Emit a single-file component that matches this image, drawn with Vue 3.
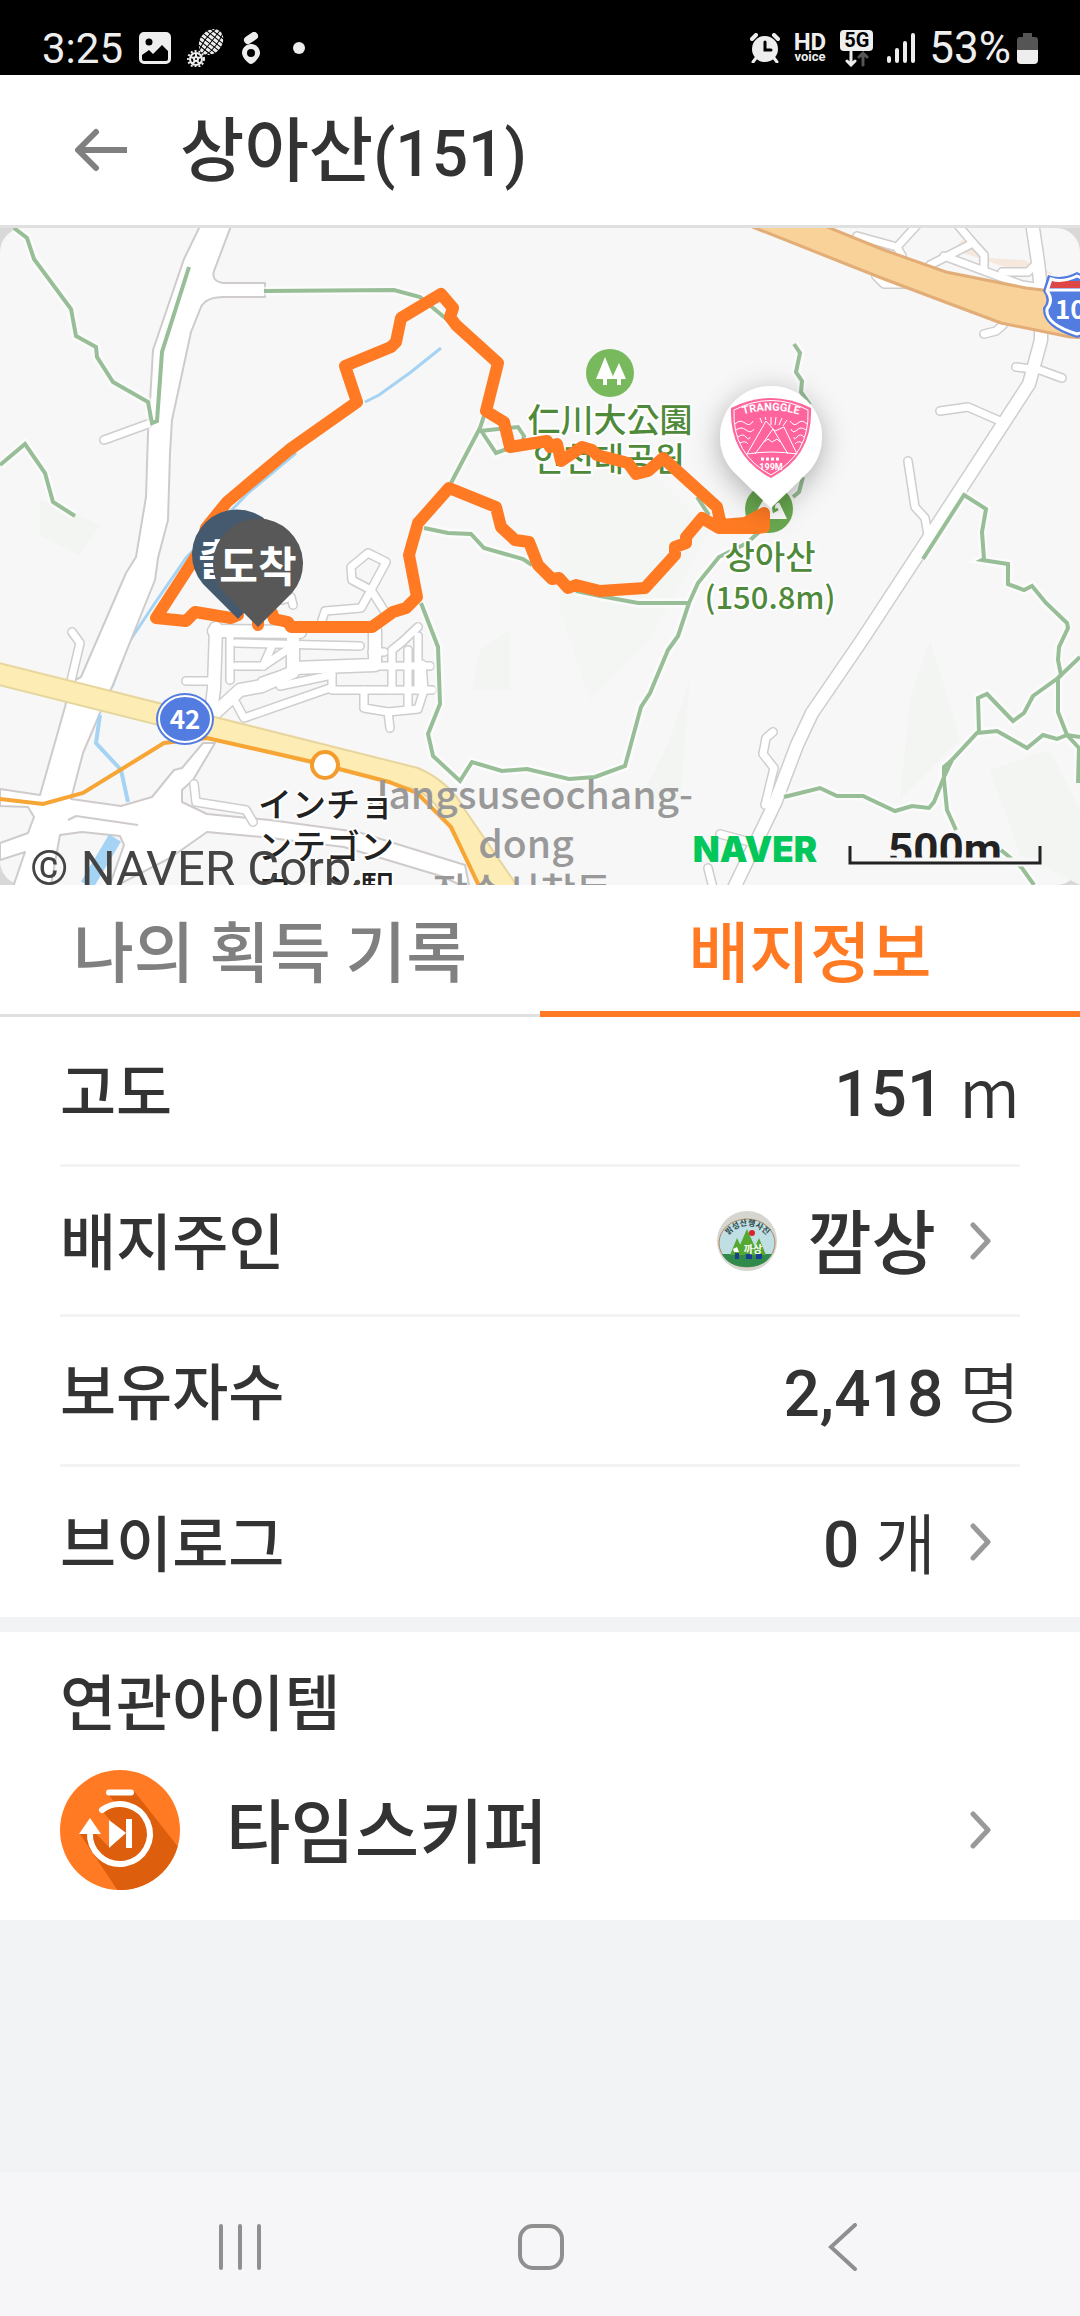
<script setup>
import { ref } from 'vue'

const activeTab = ref('badge')

const tabs = [
  { id: 'record', label: '나의 획득 기록' },
  { id: 'badge', label: '배지정보' },
]

const rows = [
  { label: '고도', value: '151', unit: 'm' },
  { label: '배지주인', value: '깜상', name: true, link: true },
  { label: '보유자수', value: '2,418', unit: '명' },
  { label: '브이로그', value: '0', unit: '개', link: true },
]

// Map geometry
const trails = [
  '14,228 27,238 34,259 71,309 76,336 96,347 97,357 113,382 148,402 152,423 157,421 162,352 189,267',
  '0,465 25,444 45,473 53,502 75,516',
  '264,291 394,290 420,297 456,327',
  '486,410 480,428 451,483',
  '480,431 518,427 524,436 522,444',
  '480,429 496,453 510,448',
  '424,528 448,533 471,534 484,548 523,559 532,565',
  '421,603 438,647 440,704 428,734 433,756 460,781 472,762 502,771 527,769 569,779 595,777 625,766 641,707 650,693 668,650 678,636 689,603 698,583 719,557 747,543 759,532',
  '689,603 638,603 600,596 576,591',
  '794,344 800,353 796,372 802,381 801,392 810,405',
  '803,477 799,492 793,497',
  '697,497 709,515',
  '923,559 964,495 986,509 982,532 984,559 982,560 1008,564 1008,584 1024,590 1032,586 1046,603 1067,623 1068,628 1059,647 1058,660 1061,675 1058,678 1058,712 1067,735 1079,748 1078,783',
  '1080,657 1058,678 1033,696 1024,713 1013,721 987,694 978,698 979,732',
  '1080,737 1067,735 1057,739 1043,735 1027,748 997,731 977,733 952,760 944,777 934,802 929,808 912,806 895,811 863,796 837,796 820,788 784,797',
  '952,760 944,767 944,780 947,810 956,830',
  '1001,850 1013,860 1022,868 1034,885',
]

const lanes = [
  '104,440 148,424',
  '72,632 80,643 70,685',
  '857,236 897,247 917,225',
  '897,247 902,256',
  '930,265 973,243 957,224',
  '973,243 984,255 984,270',
  '944,256 1022,285 1036,287',
  '1002,272 1028,272 1038,262',
  '876,276 884,284 912,284',
  '984,334 996,331 1003,325',
  '1016,367 1040,370 1062,378',
  '940,411 968,407 1000,421',
  '908,461 915,507 925,518 928,535',
  '773,732 766,738 763,754 774,768 765,805',
  '708,868 714,892',
  '720,834 750,842',
  '186,681 212,681',
  '230,634 230,680',
  '236,643 360,646',
  '263,666 272,646',
  '236,666 263,666 293,646',
  '236,703 244,718 330,688',
  '262,681 300,668 372,664',
  '280,686 332,675',
  '332,668 332,690 375,690 432,690',
  '364,690 364,708 388,712 390,728',
  '388,712 418,709 424,690 422,664',
  '380,666 430,666',
  '372,652 384,652',
  '392,690 392,650 402,642 418,627',
  '408,650 408,706',
  '418,636 418,690',
  '322,620 325,611 361,608 371,590 352,580 351,567 368,553 386,562 371,590 385,612',
  '293,605 291,597 282,600',
  '194,784 196,802 246,810 253,822',
]

const avenues = [
  '293,630 293,672 262,686 240,690 205,722',
  '375,630 375,665 293,668',
  '216,628 214,688 212,705',
  '214,631 300,632',
]

const route = '238,615 231,618 195,612 186,621 156,618 200,550 206,528 227,502 289,450 357,402 345,366 391,347 396,342 401,318 441,294 453,308 450,317 456,325 498,363 486,411 504,422 510,447 547,441 550,447 557,444 561,461 582,447 592,450 597,455 628,463 636,474 648,471 663,458 717,507 721,525 745,523 764,513 764,527 758,528 719,528 702,518 686,537 686,543 675,547 675,555 645,588 600,591 576,585 568,588 559,578 552,579 538,565 529,542 515,540 501,527 496,507 449,488 418,523 409,555 417,597 406,608 393,612 372,627 291,627 288,622 274,619 272,613 258,607 258,625'
</script>

<template>
  <div class="screen">
    <!-- Status bar -->
    <div class="status">
      <div class="status-left">
        <span class="clock">3:25</span>
        <svg width="32" height="32" viewBox="0 0 32 32">
          <path fill="#eee" fill-rule="evenodd" d="M5 0h22a5 5 0 0 1 5 5v22a5 5 0 0 1-5 5H5a5 5 0 0 1-5-5V5a5 5 0 0 1 5-5zM10 6.500a3.500 3.500 0 1 0 0 7 3.500 3.500 0 0 0 0-7zM3 23v4a2 2 0 0 0 2 2h22a2 2 0 0 0 2-2v-8l-6-6-9 9-4-4z" />
        </svg>
        <svg width="38" height="38" viewBox="0 0 38 38" fill="none" stroke="#eee">
          <g transform="rotate(38 24 13)">
            <ellipse cx="24" cy="13" rx="11" ry="14" fill="#eee" stroke="none" />
            <path d="M12 3h24M12 7h24M12 11h24M12 15h24M12 19h24M12 23h24" stroke="#000" stroke-width="1" />
            <path d="M20 -1q-4 14 0 28M28 -1q4 14 0 28M24 -1v28" stroke="#000" stroke-width="1" />
          </g>
          <circle cx="9" cy="30" r="6" stroke-width="2" />
          <circle cx="9" cy="30" r="8" stroke-width="2" stroke-dasharray="2 2" />
          <circle cx="9" cy="30" r="2" stroke-width="2" />
          <path d="M9 24v4M3 28l4 1M15 28l-4 1M5 35l3-3M13 35l-3-3" stroke-width="2" />
        </svg>
        <svg width="20" height="32" viewBox="0 0 20 32">
          <path d="M7 8L13 4" stroke="#eee" stroke-width="8" stroke-linecap="round" />
          <path fill="#eee" fill-rule="evenodd" d="M10 12c5 0 9 4 9 9 0 4-6 11-9 11s-9-7-9-11c0-5 4-9 9-9zm0 5a4 4 0 1 0 0 8 4 4 0 0 0 0-8z" />
        </svg>
        <span class="dot"></span>
      </div>
      <div class="status-right">
        <svg width="30" height="30" viewBox="0 0 30 30">
          <circle cx="15" cy="16" r="13" fill="#eee" />
          <path d="M2 6l4-4M28 6l-4-4" stroke="#eee" stroke-width="4" stroke-linecap="round" />
          <path d="M6 25l-3 4M24 25l3 4" stroke="#eee" stroke-width="3" stroke-linecap="round" />
          <path d="M15 9v8h6" stroke="#000" stroke-width="3" fill="none" stroke-linecap="round" />
        </svg>
        <span class="hd"><b>HD</b><small>voice</small></span>
        <span class="net">
          <b>5G</b>
          <svg width="24" height="16" viewBox="0 0 24 16" fill="none" stroke-width="3" stroke-linecap="round">
            <path d="M6 1v13M2 10l4 4 4-4" stroke="#eee" />
            <path d="M18 14V2M14 6l4-4 4 4" stroke="#555" />
          </svg>
        </span>
        <svg width="28" height="30" viewBox="0 0 28 30" stroke="#eee" stroke-width="4" stroke-linecap="round">
          <path d="M2 25v3M10 17v11M18 10v18M26 2v26" />
        </svg>
        <span class="battery">
          <span class="percent">53%</span>
          <svg width="21" height="32" viewBox="0 0 21 32">
            <path fill="#555" d="M6 1h9v4h3a3 3 0 0 1 3 3v11H0V8a3 3 0 0 1 3-3h3z" />
            <path fill="#eee" d="M0 18h21v10a4 4 0 0 1-4 4H4a4 4 0 0 1-4-4z" />
          </svg>
        </span>
      </div>
    </div>

    <!-- Header -->
    <header class="header">
      <button class="icon-button" aria-label="뒤로">
        <svg width="54" height="46" viewBox="0 0 54 46" fill="none" stroke="#808080" stroke-width="6">
          <path d="M4 23h49" />
          <path d="M22 5L4 23l18 18" stroke-linecap="round" stroke-linejoin="round" />
        </svg>
      </button>
      <h1>상아산<span class="num">(151)</span></h1>
    </header>

    <!-- Map -->
    <div class="map">
      <svg viewBox="0 228 1080 657">
        <defs>
          <filter id="pin-shadow" x="-60%" y="-60%" width="220%" height="220%">
            <feDropShadow dx="0" dy="6" stdDeviation="14" flood-color="#000" flood-opacity="0.3" />
          </filter>
        </defs>
        <rect x="0" y="228" width="1080" height="657" fill="#d8d8d8" />
        <rect x="0" y="228" width="1080" height="657" rx="24" fill="#f7f7f7" />

        <g fill="#f2f5f1">
          <path d="M560 480l80-20 70 70-60 110-60 60-30-90z" opacity="0.6" />
          <path d="M40 500l60 25-20 30-40-20z" />
          <path d="M930 640l30 100-60 60 10-100z" />
          <path d="M990 770l60-20 30 60v75l-60-30z" />
          <path d="M480 650l30-20v60h-38zM640 800l30-60 20-60-10 120z" />
        </g>
        <g fill="#f7e8de">
          <path d="M962 240l26 18 36 2 30 14-40-4-60-20z" />
        </g>

        <!-- Water -->
        <g fill="none" stroke="#a5d3f3">
          <polyline points="441,348 411,372 379,395 365,402" stroke-width="3" />
          <polyline points="296,453 248,493 186,558 155,603 129,642 112,687" stroke-width="3" />
        </g>

        <!-- Roads -->
        <g fill="#fff" stroke="#cfcbca" stroke-width="2" stroke-linejoin="round">
          <path d="M200 226L184 259 153 350 150 402 148 433 146 497 136 557 126 573 81 677 71 682 65 707 40 795 0 789V806L28 807 34 817 28 833 0 843V860L25 852 12 890H50L60 835 82 832 120 836 124 845 108 890 170 858 207 832 262 837 344 847 444 877 470 890 465 865 358 832 270 820 207 814 182 802 182 790 193 780 215 743 203 743 182 768 174 770 152 797 121 806 71 799 83 753 100 713 112 687 155 580 158 558 168 520 170 453 172 420 191 332 201 307Q206 297 224 297H265V283H223Q211 281 214 271L231 226z" />
        </g>
        <path d="M68 820L76 816 138 825" fill="none" stroke="#cfcbca" stroke-width="2" />
        <g fill="none" stroke="#a5d3f3">
          <polyline points="100,715 96,743 121,770 128,802" stroke-width="4" />
          <path d="M115 838L87 885" stroke-width="14" />
        </g>
        <g fill="none" stroke-linecap="round" stroke-linejoin="round">
          <g stroke="#cfcdcd" stroke-width="10">
            <polyline v-for="p in lanes" :key="p" :points="p" />
          </g>
          <g stroke="#cfcdcd" stroke-width="15">
            <polyline v-for="p in avenues" :key="p" :points="p" />
            <polyline points="1032,222 1038,262 1041,290 1041,340 1029,384 921,550 862,640 812,713 797,745 775,803 733,890" />
          </g>
          <g stroke="#fff" stroke-width="7">
            <polyline v-for="p in lanes" :key="p" :points="p" />
          </g>
          <g stroke="#fff" stroke-width="12">
            <polyline v-for="p in avenues" :key="p" :points="p" />
            <polyline points="1032,222 1038,262 1041,290 1041,340 1029,384 921,550 862,640 812,713 797,745 775,803 733,890" />
          </g>
        </g>

        <!-- Highways -->
        <path d="M745 224L884 279 953 305 1001 323 1070 337 1090 338V292L1043 290 1026 288 946 272 884 250 820 224z" fill="#f8d298" stroke="#e2ad76" stroke-width="3" />
        <path d="M-5 662L418 768Q450 782 465 810L520 890H482L444 817Q430 792 406 787L-5 684z" fill="#fdedb4" stroke="#e6d69e" stroke-width="2" />
        <polyline points="0,799 43,804 83,793 164,743 207,738 313,762 389,782 417,793 451,827 480,888" fill="none" stroke="#f7a535" stroke-width="4" />
        <circle cx="325" cy="765" r="13" fill="#fff" stroke="#f39b2c" stroke-width="4" />

        <!-- Trails -->
        <g fill="none" stroke="#fff" stroke-width="9" opacity="0.6">
          <polyline v-for="p in trails" :key="p" :points="p" />
        </g>
        <g fill="none" stroke="#98be97" stroke-width="4">
          <polyline v-for="p in trails" :key="p" :points="p" />
        </g>

        <!-- Road numbers -->
        <ellipse cx="185" cy="719" rx="29" ry="26" fill="#527ce0" />
        <ellipse cx="185" cy="719" rx="26" ry="23" fill="none" stroke="#fff" stroke-width="2" />
        <text class="road" x="185" y="729" font-size="26">42</text>
        <g>
          <path d="M1048 275Q1062 280 1077 272 1092 280 1106 275L1112 292Q1104 300 1112 310 1112 328 1077 338 1042 328 1043 308 1050 300 1043 291z" fill="#527ce0" />
          <path d="M1052 281H1100V288H1050z" fill="#df4646" />
          <path d="M1051 279Q1062 283 1077 276 1092 283 1104 279L1108 291Q1100 300 1108 310 1108 324 1077 334 1045 324 1047 309 1054 300 1047 291zM1049 290H1106" fill="none" stroke="#fff" stroke-width="3" />
          <text class="road" x="1078" y="319" font-size="26">100</text>
        </g>

        <!-- Places -->
        <circle cx="610" cy="373" r="24" fill="#78b95d" />
        <path d="M605 357l9 22h-7v6h-4v-6h-7zM619 363l7 16h-5v6h-4v-6h-3l-1-3z" fill="#fff" />
        <circle cx="769" cy="509" r="24" fill="#68a84f" />
        <path d="M752 519l14-24 8 9 5-2 8 17z" fill="#fff" />
        <path d="M780 501q-8 0-6 10l4-2" fill="none" stroke="#68a84f" stroke-width="3" />
        <g class="place">
          <text x="610" y="432" font-size="33">仁川大公園</text>
          <text x="609" y="471" font-size="33">인천대공원</text>
          <text x="770" y="569" font-size="33">상아산</text>
          <text x="770" y="609" font-size="31">(150.8m)</text>
        </g>
        <g class="district">
          <text x="530" y="809" font-size="39">Jangsuseochang-</text>
          <text x="526" y="858" font-size="39">dong</text>
          <text x="522" y="906" font-size="39">장수서창동</text>
        </g>
        <g class="station">
          <text x="326" y="817" font-size="34">インチョ</text>
          <text x="326" y="859" font-size="34">ンテゴン</text>
          <text x="326" y="901" font-size="34">ウォン駅</text>
        </g>

        <!-- Route -->
        <polyline :points="route" fill="none" stroke="#ff7a22" stroke-width="12" stroke-linecap="round" stroke-linejoin="round" />

        <!-- Start and finish pins -->
        <path d="M238 619L203 584A45 45 0 1 1 271 584z" fill="#455a6e" />
        <text class="pin" x="237" y="575" font-size="42">출발</text>
        <path d="M258 627L224 593A45 45 0 1 1 292 593z" fill="#585858" />
        <text class="pin" x="258" y="582" font-size="42">도착</text>

        <!-- Badge pin -->
        <path d="M771 508L733 471A51 51 0 1 1 809 471z" fill="#fff" filter="url(#pin-shadow)" />
        <path d="M731 408Q771 388 811 408 813 456 771 478 729 456 731 408z" fill="#ff659c" />
        <g fill="none" stroke="#fff" stroke-width="1">
          <path d="M734 410Q771 391 808 410 810 454 771 475 732 454 734 410z" />
          <path d="M747 454L766 421 775 431 784 427 797 454M755 454L773 429 788 454M747 454Q771 450 797 454" />
          <path d="M735 424q5-5 10-1t8-2M736 430q5-4 10 0t8-1M738 437q5-4 8 0t4 0M740 443q5-3 8 1M807 424q-5-5-9-1t-8-2M806 430q-5-4-9 0t-6-1M804 437q-4-4-7 0t-3 0M802 443q-4-3-7 1" />
          <path d="M771 417v8M776 417l-1 8M782 418l-3 7M787 420l-4 6M765 417l1 3M760 418l2 5M764 442l4-3 4 3 5-3 3 3" />
        </g>
        <defs><path id="badge-arc" d="M739 416Q771 405 803 416" /></defs>
        <text class="badge-text" font-size="11"><textPath href="#badge-arc" startOffset="50%">TRANGGLE</textPath></text>
        <path d="M761 459h20" stroke="#fff" stroke-width="3" stroke-dasharray="3 2" />
        <text class="badge-text" x="771" y="470" font-size="9">199M</text>

        <!-- Attribution and scale -->
        <text class="copyright" x="30" y="885" font-size="49">© NAVER Corp.</text>
        <text class="naver" x="755" y="862" font-size="35">NAVER</text>
        <text class="scale" x="945" y="865" font-size="44">500m</text>
        <path d="M850 862H1040" stroke="#f7f7f7" stroke-width="9" />
        <path d="M850 846V863H1040V846" fill="none" stroke="#222" stroke-width="3" />
      </svg>
    </div>

    <!-- Tabs -->
    <nav class="tabs">
      <button
        v-for="tab in tabs"
        :key="tab.id"
        :class="{ active: activeTab === tab.id }"
        @click="activeTab = tab.id">{{ tab.label }}</button>
    </nav>

    <!-- Badge info -->
    <main>
      <section class="info">
        <component :is="row.link ? 'button' : 'div'" v-for="row in rows" :key="row.label" class="row">
          <span class="label">{{ row.label }}</span>
          <svg v-if="row.name" class="avatar" width="60" height="60" viewBox="0 0 60 60">
            <circle cx="30" cy="30" r="30" fill="#d5d6d0" />
            <ellipse cx="30" cy="32" rx="28" ry="24" fill="#bfdfe5" stroke="#b08a62" stroke-width="1" />
            <path d="M5 43H55Q48 56 30 56T5 43z" fill="#2f8a4b" />
            <path d="M30 18l11 25H19zM20 27l8 17H13zM42 27l7 17H34z" fill="#55a832" />
            <circle cx="35" cy="22" r="3" fill="#d8262c" />
            <path d="M18 42h4v6h-4zM29 43h6v5h-6zM39 43h6v5h-6z" fill="#1b3d92" />
            <path d="M16 38l4-2 2 5h-5z" fill="#fff" />
            <defs><path id="avatar-arc" d="M7 29Q30 0 54 29" /></defs>
            <text font-size="8" font-weight="700" fill="#2f4a48"><textPath href="#avatar-arc" startOffset="50%" text-anchor="middle">밝성산행사진</textPath></text>
            <text x="36" y="42" font-size="10" font-weight="700" fill="#fff" text-anchor="middle">까상</text>
          </svg>
          <span :class="row.name ? 'name' : 'value'">{{ row.value }}</span>
          <span v-if="row.unit" class="unit">{{ row.unit }}</span>
          <svg v-if="row.link" class="chevron" width="22" height="38" viewBox="0 0 22 38">
            <path d="M3 3l15 16L3 35" />
          </svg>
        </component>
      </section>

      <section class="related">
        <h2>연관아이템</h2>
        <button class="item">
          <svg width="120" height="120" viewBox="0 0 120 120">
            <defs>
              <clipPath id="item-clip"><circle cx="60" cy="60" r="60" /></clipPath>
            </defs>
            <circle cx="60" cy="60" r="60" fill="#ff7a22" />
            <path clip-path="url(#item-clip)" d="M48 24L74 21 130 92 110 130 66 130 20 64 36 64 44 50 51 78 62 62 42 40 56 34z" fill="#dd5f0d" />
            <path d="M42 40L66 74 32 68 20 64 60 124 90 90 60 34z" fill="#dd5f0d" clip-path="url(#item-clip)" />
            <path d="M41 41L50 50V78L32 60z" fill="#ff7a22" />
            <path d="M49 22.500H71" stroke="#fff" stroke-width="6" stroke-linecap="round" />
            <path d="M42 40A30 30 0 1 1 30 62" fill="none" stroke="#fff" stroke-width="6" stroke-linecap="round" />
            <path d="M30 48L41 64H19zM49 50L66 63V49H72V78H66V63L49 78z" fill="#fff" />
          </svg>
          <span class="item-name">타임스키퍼</span>
          <svg class="chevron" width="22" height="38" viewBox="0 0 22 38">
            <path d="M3 3l15 16L3 35" />
          </svg>
        </button>
      </section>
    </main>

    <!-- System navigation -->
    <footer class="system">
      <button class="icon-button" aria-label="최근 앱">
        <svg width="46" height="48" viewBox="0 0 46 48" stroke="#8f8f8f" stroke-width="4" stroke-linecap="round">
          <path d="M4 3v42M23 3v42M42 3v42" />
        </svg>
      </button>
      <button class="icon-button" aria-label="홈">
        <svg width="48" height="48" viewBox="0 0 48 48" fill="none" stroke="#8f8f8f" stroke-width="4">
          <rect x="3" y="3" width="42" height="42" rx="13" />
        </svg>
      </button>
      <button class="icon-button" aria-label="뒤로 가기">
        <svg width="46" height="48" viewBox="0 0 46 48" fill="none" stroke="#8f8f8f" stroke-width="4" stroke-linecap="round">
          <path d="M36 2L12 24l24 22" />
        </svg>
      </button>
    </footer>
  </div>
</template>

<style>
body {
  margin: 0;
  background: #f1f3f5;
}
</style>

<style scoped>
.screen {
  display: flex;
  flex-direction: column;
  min-height: 100vh;
  color: #333;
  font-family: "Noto Sans CJK KR", "Noto Sans", sans-serif;
  font-weight: 500;
}

svg {
  display: block;
  flex: none;
}

button {
  padding: 0;
  border: none;
  background: none;
  color: inherit;
  font: inherit;
  cursor: pointer;
}

/* Status bar */
.status {
  display: flex;
  justify-content: space-between;
  box-sizing: border-box;
  height: 75px;
  padding: 21px 42px 0 42px;
  background: #000;
  color: #eee;
  font-family: Roboto, sans-serif;
  font-weight: 400;
}

.status-left,
.status-right,
.battery {
  display: flex;
  align-items: center;
}

.status-left {
  gap: 16px;
}

.status-right {
  gap: 14px;
}

.battery {
  gap: 6px;
}

.clock {
  font-size: 42px;
}

.percent {
  font-size: 44px;
}

.dot {
  width: 12px;
  height: 12px;
  margin-left: 16px;
  border-radius: 50%;
  background: #eee;
}

.hd,
.net {
  display: flex;
  flex-direction: column;
  align-items: center;
}

.hd b {
  font-size: 24px;
  line-height: 18px;
}

.hd small {
  font-size: 13px;
  line-height: 12px;
  font-weight: 700;
}

.net b {
  padding: 0 4px;
  border-radius: 4px;
  background: #eee;
  color: #000;
  font-size: 20px;
  line-height: 21px;
}

/* Header */
.header {
  display: flex;
  align-items: center;
  gap: 52px;
  box-sizing: border-box;
  height: 153px;
  padding: 0 74px;
  border-bottom: 3px solid #e0e0e0;
  background: #fff;
}

.icon-button {
  display: flex;
}

h1 {
  margin: 0;
  font-size: 70px;
  line-height: 100px;
  font-weight: 500;
}

.num,
.value {
  font-family: Roboto, sans-serif;
  font-size: 64px;
}

/* Map */
.map {
  overflow: hidden;
}

.map svg {
  width: 100%;
  height: auto;
}

.map text {
  text-anchor: middle;
  font-family: "Noto Sans CJK KR", sans-serif;
  font-weight: 500;
}

.map .road {
  fill: #fff;
  font-weight: 700;
}

.place,
.district,
.station {
  paint-order: stroke;
  stroke: #fff;
  stroke-width: 4px;
  stroke-linejoin: round;
}

.place {
  fill: #4f8a3a;
}

.district {
  fill: #999;
  stroke: none;
}

.station {
  fill: #222;
}

.map .station text {
  font-family: "Noto Sans CJK JP", sans-serif;
}

.map .pin {
  fill: #fff;
  font-weight: 700;
}

.map .badge-text {
  fill: #fff;
  font-family: Roboto, sans-serif;
  font-weight: 700;
}

.map .copyright {
  fill: #444;
  font-family: Roboto, sans-serif;
  font-weight: 400;
  text-anchor: start;
}

.map .naver {
  fill: #03c75a;
  font-family: Inter, sans-serif;
  font-weight: 900;
}

.map .scale {
  fill: #222;
  font-family: Roboto, sans-serif;
  font-weight: 700;
}

/* Tabs */
.tabs {
  display: flex;
  background: #fff;
}

.tabs button {
  flex: 1;
  box-sizing: border-box;
  height: 132px;
  padding-bottom: 3px;
  border-bottom: 3px solid #e0e0e0;
  color: #808080;
  font-size: 66px;
  line-height: 100px;
}

.tabs button.active {
  padding-bottom: 0;
  border-bottom: 6px solid #ff7a22;
  color: #ff7a22;
}

/* Badge info */
.info {
  padding: 0 60px;
  background: #fff;
}

.row {
  display: flex;
  align-items: center;
  box-sizing: border-box;
  width: 100%;
  height: 150px;
  border-bottom: 3px solid #f1f3f5;
  text-align: left;
}

.row:last-child {
  border-bottom: none;
}

.label,
.name,
.unit,
.item-name {
  padding-bottom: 4px;
}

.label {
  flex: 1;
  font-size: 61px;
}

.avatar {
  margin-right: 30px;
}

.name {
  font-size: 70px;
  line-height: 100px;
}

.value {
  padding-top: 8px;
  line-height: 100px;
}

.unit {
  margin-left: 16px;
  font-size: 66px;
  line-height: 100px;
  font-weight: 350;
}

.chevron {
  margin: 0 28px 0 34px;
  fill: none;
  stroke: #999;
  stroke-width: 5;
  stroke-linecap: round;
  stroke-linejoin: round;
}

.related {
  padding: 28px 60px 30px;
  border-top: 15px solid #f1f3f5;
  background: #fff;
}

h2 {
  margin: 0 0 30px;
  font-size: 61px;
  line-height: 80px;
  font-weight: 500;
}

.item {
  display: flex;
  align-items: center;
  width: 100%;
}

.item-name {
  flex: 1;
  padding-left: 46px;
  font-size: 70px;
  line-height: 100px;
  text-align: left;
}

/* System navigation */
.system {
  display: flex;
  justify-content: space-around;
  align-items: center;
  box-sizing: border-box;
  height: 144px;
  margin-top: auto;
  padding: 6px 88px 0 90px;
  background: #f6f6f8;
}
</style>
